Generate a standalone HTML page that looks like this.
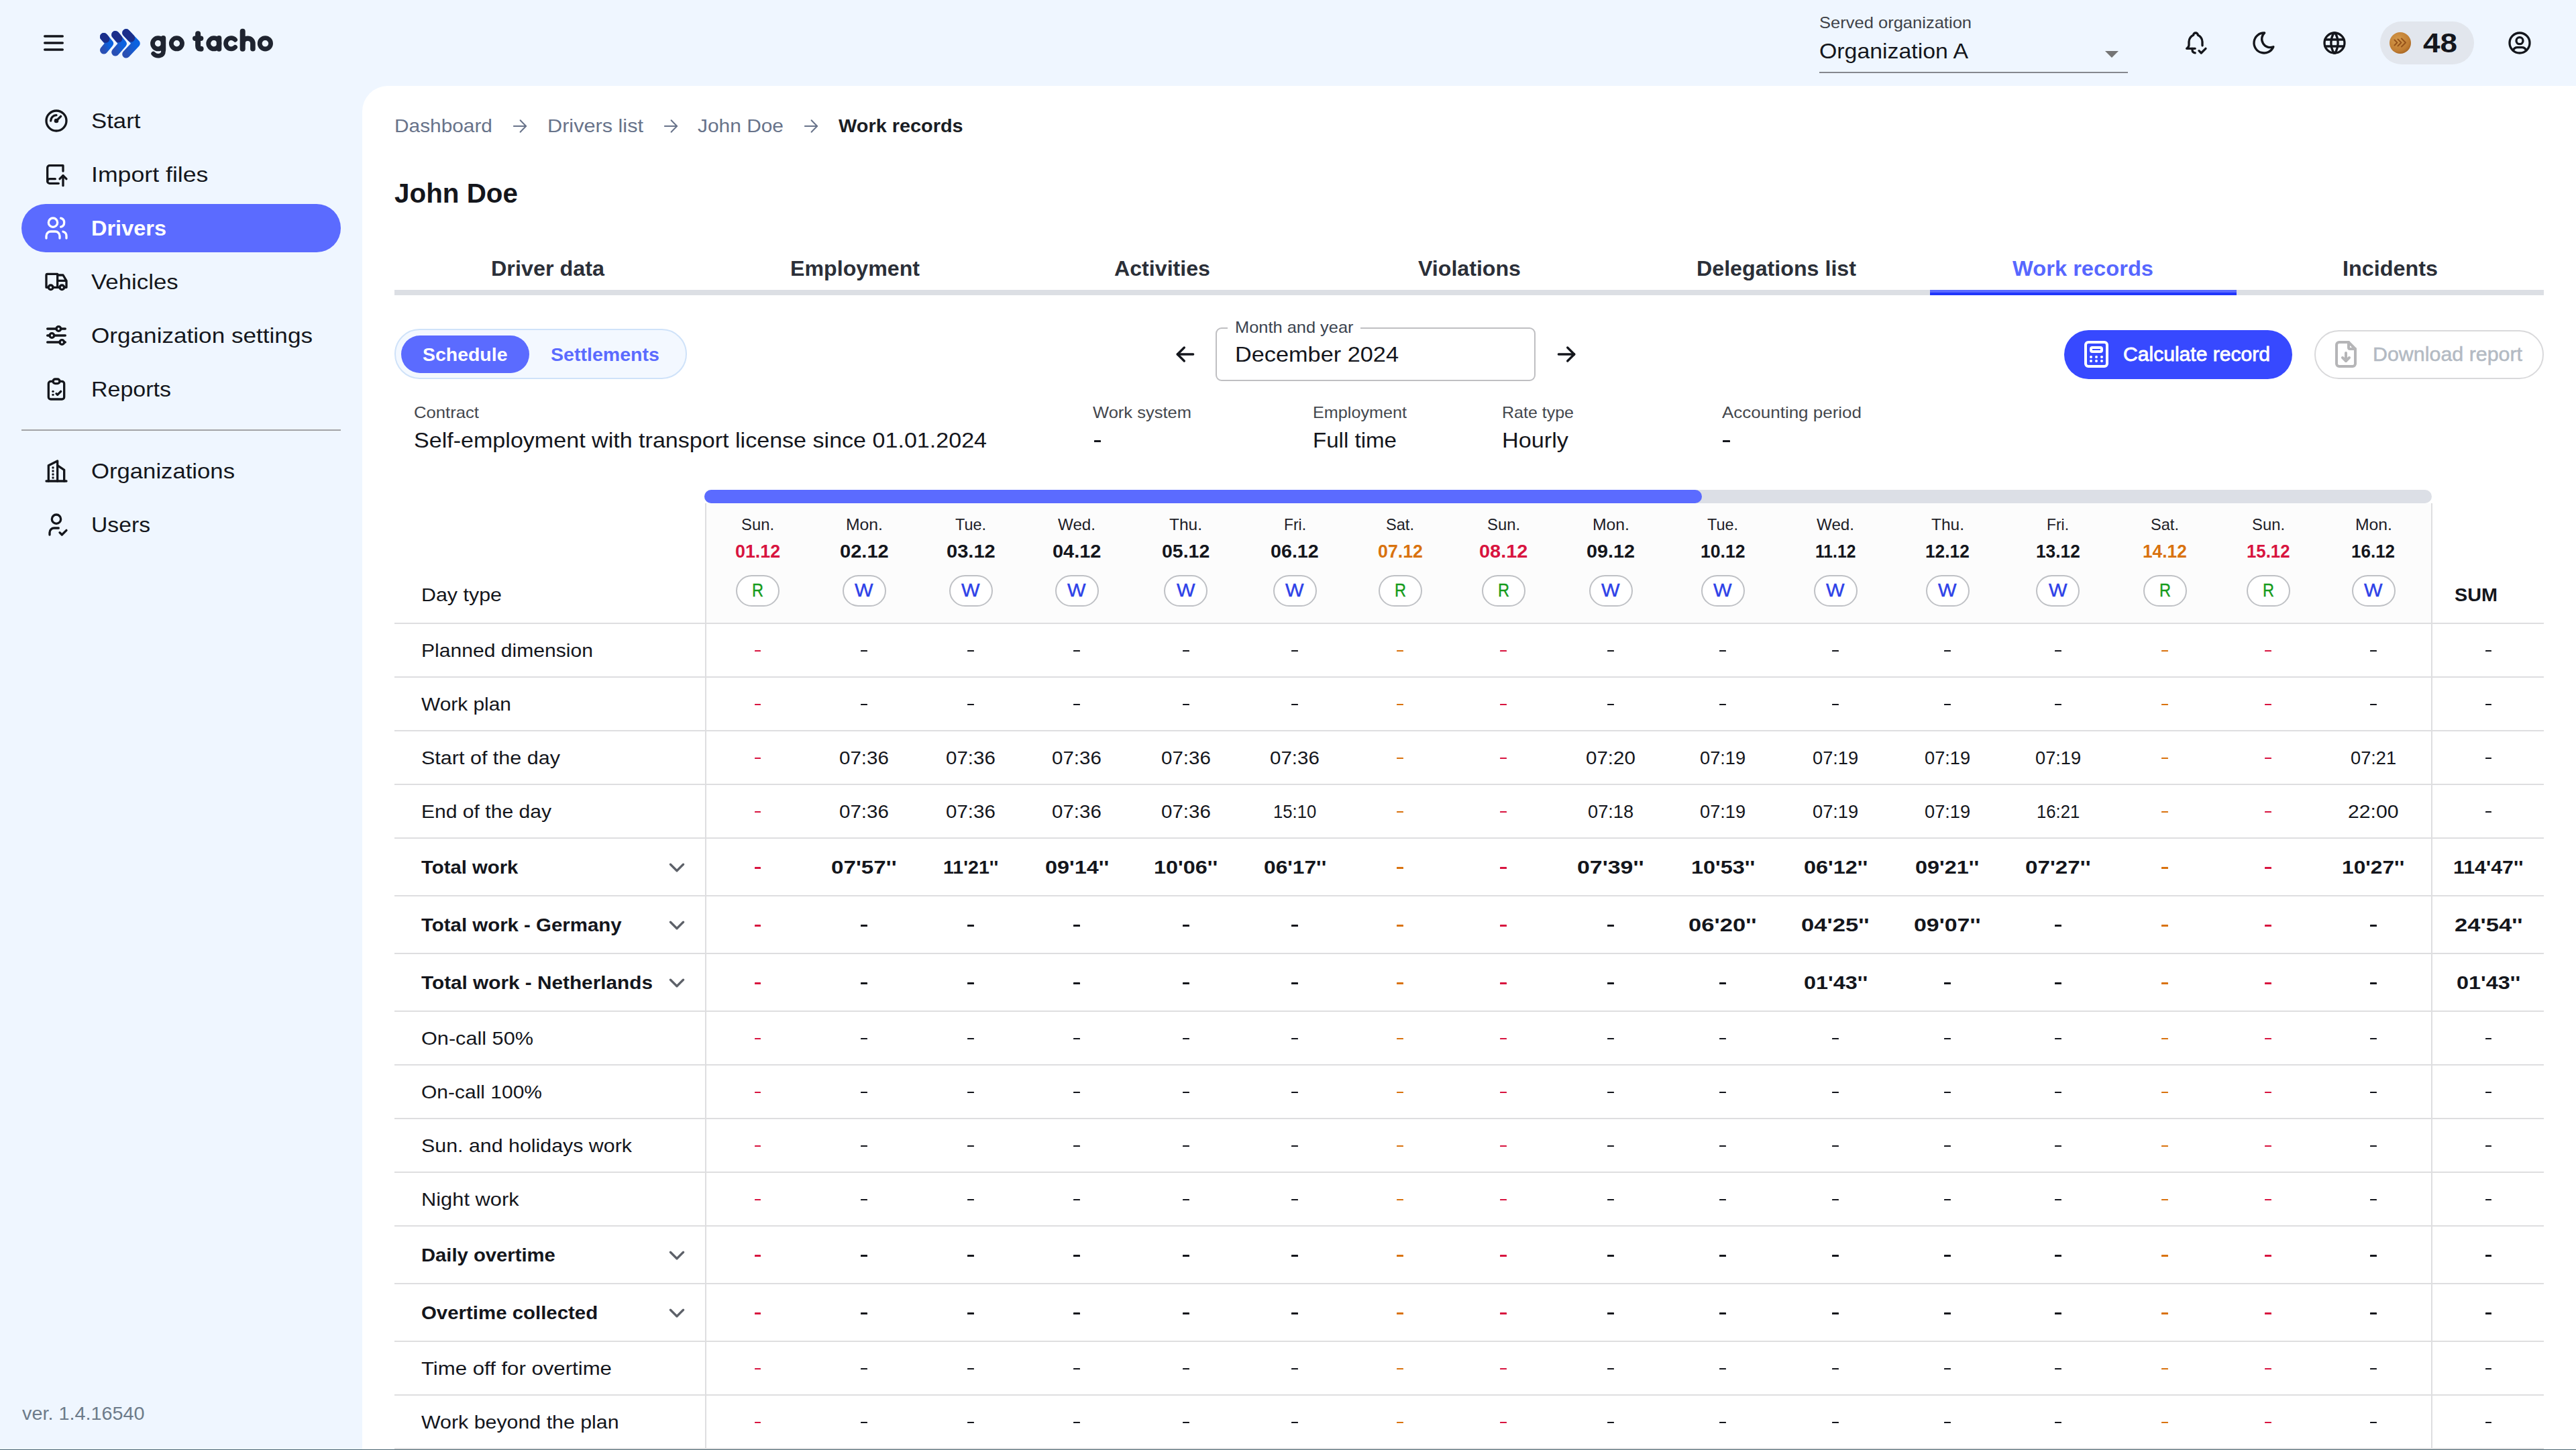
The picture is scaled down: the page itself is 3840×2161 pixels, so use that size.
<!DOCTYPE html>
<html><head><meta charset="utf-8"><title>Work records</title>
<style>
html,body{margin:0;padding:0;}
body{width:3840px;height:2161px;overflow:hidden;position:relative;background:#eff6ff;font-family:"Liberation Sans",sans-serif;}
.t{position:absolute;white-space:nowrap;line-height:1;transform-origin:0 0;}
.b{position:absolute;}
</style></head><body>
<div class="b" style="left:540px;top:128px;width:3300px;height:2040px;background:#fff;border-top-left-radius:38px;"></div>
<svg class="b" style="left:60.0px;top:44.0px" width="40" height="40" viewBox="0 0 24 24" fill="none" stroke="#14161c" stroke-width="2" stroke-linecap="round" stroke-linejoin="round"><path d="M4 6h16"/><path d="M4 12h16"/><path d="M4 18h16"/></svg>
<svg class="b" style="left:140px;top:30px" width="280" height="70" viewBox="140 30 280 70" fill="none" stroke-linecap="round" stroke-linejoin="round">
<defs><linearGradient id="lg" x1="0" y1="1" x2="1" y2="0"><stop offset="0" stop-color="#2a4fb3"/><stop offset="0.7" stop-color="#0a62e0"/></linearGradient></defs>
<g stroke="url(#lg)" stroke-width="11.6">
<path d="M154.8 74.8 L163.2 64.8 L154.8 54.7"/>
<path d="M172 77.8 L183 65.1 L172 51.7"/>
<path d="M188 80.8 L203 64.8 L188 48.9"/>
</g>
<g stroke="#1b2e8a" stroke-width="11.6">
<path d="M154.8 54.7 L157.6 58"/>
<path d="M172 51.7 L176.8 57.5"/>
<path d="M188 48.9 L195.4 56.8"/>
</g>
<g stroke="#1f2430" stroke-width="8">
<circle cx="235.6" cy="64.8" r="8.1" stroke-width="6.8"/><path d="M243.4 56.8 V74" stroke-width="7.6"/><path d="M243.6 72 V75.5 C243.6 84.6 233.4 85 228.6 79.9" stroke-width="6.6"/>
<circle cx="263.4" cy="64.8" r="8.1" stroke-width="6.8"/>
<path d="M295.1 50.3 V68.5 C295.1 72.3 296.5 72.7 299.6 72.7"/><path d="M290.7 57.2 H299.6" stroke-width="7.4"/>
<circle cx="318.8" cy="64.8" r="8.1" stroke-width="6.8"/><path d="M326.5 56.8 V72.9" stroke-width="7.6"/>
<path d="M350.6 59.3 A8.1 8.1 0 1 0 350.6 70.3" stroke-width="6.8"/>
<path d="M361.7 46.8 V72.7"/><path d="M361.7 64.8 A7.6 7.6 0 0 1 376.9 64.8 V72.7" stroke-width="7.6"/>
<circle cx="395.4" cy="64.8" r="8.2" stroke-width="6.8"/>
</g></svg>
<span class="t" style="left:2712.00px;top:21.68px;font-size:24px;color:#3f4248;transform:scaleX(1.0635);">Served organization</span>
<span class="t" style="left:2712.00px;top:59.91px;font-size:32px;color:#14161c;transform:scaleX(1.0576);">Organization A</span>
<div class="b" style="left:2712px;top:107px;width:460px;height:2px;background:#85888e;"></div>
<svg class="b" style="left:3138px;top:76px" width="20" height="10" viewBox="0 0 20 10"><path d="M0 0h20l-10 10z" fill="#757575"/></svg>
<svg class="b" style="left:3252.5px;top:44.0px" width="40" height="40" viewBox="0 0 24 24" fill="none" stroke="#14161c" stroke-width="2" stroke-linecap="round" stroke-linejoin="round"><path d="M11.5 17h-7.5a4 4 0 0 0 2 -3v-3a7 7 0 0 1 4 -6a2 2 0 1 1 4 0a7 7 0 0 1 4 6v3c.016 .129 .037 .256 .065 .382"/><path d="M9 17v1a3 3 0 0 0 2.502 2.959"/><path d="M15 19l2 2l4 -4"/></svg>
<svg class="b" style="left:3355.0px;top:44.0px" width="40" height="40" viewBox="0 0 24 24" fill="none" stroke="#14161c" stroke-width="2" stroke-linecap="round" stroke-linejoin="round"><path d="M12 3c.132 0 .263 0 .393 0a7.5 7.5 0 0 0 7.92 12.446a9 9 0 1 1 -8.313 -12.454z"/></svg>
<svg class="b" style="left:3460.0px;top:44.0px" width="40" height="40" viewBox="0 0 24 24" fill="none" stroke="#14161c" stroke-width="2" stroke-linecap="round" stroke-linejoin="round"><path d="M3 12a9 9 0 1 0 18 0a9 9 0 0 0 -18 0"/><path d="M3.6 9h16.8"/><path d="M3.6 15h16.8"/><path d="M11.5 3a17 17 0 0 0 0 18"/><path d="M12.5 3a17 17 0 0 1 0 18"/></svg>
<div class="b" style="left:3548px;top:32px;width:140px;height:64px;background:#e2e6ed;border-radius:32px;"></div>
<svg class="b" style="left:3561px;top:46.5px" width="34" height="34" viewBox="0 0 34 34"><defs><radialGradient id="cg" cx="0.4" cy="0.35" r="0.7"><stop offset="0" stop-color="#d59a4c"/><stop offset="0.75" stop-color="#c07d32"/><stop offset="1" stop-color="#a5621f"/></radialGradient></defs><circle cx="17" cy="17" r="16" fill="url(#cg)"/><g fill="none" stroke="#96531a" stroke-width="2" stroke-linecap="round" stroke-linejoin="round"><path d="M8.5 12.5l4 4l-4 4"/><path d="M13.5 11.5l5 5l-5 5"/><path d="M19 10.5l6 6l-6 6"/></g></svg>
<span class="t" style="left:3612.00px;top:44.14px;font-size:40px;color:#14161c;font-weight:700;transform:scaleX(1.1461);">48</span>
<svg class="b" style="left:3735.5px;top:44.0px" width="40" height="40" viewBox="0 0 24 24" fill="none" stroke="#14161c" stroke-width="2" stroke-linecap="round" stroke-linejoin="round"><path d="M12 12m-9 0a9 9 0 1 0 18 0a9 9 0 1 0 -18 0"/><path d="M12 10m-3 0a3 3 0 1 0 6 0a3 3 0 1 0 -6 0"/><path d="M6.168 18.849a4 4 0 0 1 3.832 -2.849h4a4 4 0 0 1 3.834 2.855"/></svg>
<div class="b" style="left:32px;top:304px;width:476px;height:72px;background:#5b6bff;border-radius:36px;"></div>
<svg class="b" style="left:64.0px;top:160.0px" width="40" height="40" viewBox="0 0 24 24" fill="none" stroke="#14161c" stroke-width="2" stroke-linecap="round" stroke-linejoin="round"><path d="M12 12m-9 0a9 9 0 1 0 18 0a9 9 0 1 0 -18 0"/><path d="M12 12m-1 0a1 1 0 1 0 2 0a1 1 0 1 0 -2 0"/><path d="M13.41 10.59l2.59 -2.59"/><path d="M7 12a5 5 0 0 1 5 -5"/></svg>
<span class="t" style="left:136.30px;top:164.41px;font-size:32px;color:#14161c;transform:scaleX(1.0862);">Start</span>
<svg class="b" style="left:64.0px;top:240.0px" width="40" height="40" viewBox="0 0 24 24" fill="none" stroke="#14161c" stroke-width="2" stroke-linecap="round" stroke-linejoin="round"><path d="M14 20h-8a2 2 0 0 1 -2 -2v-12a2 2 0 0 1 2 -2h12v5"/><path d="M11 16h-5a2 2 0 0 0 -2 2"/><path d="M15 16l3 -3l3 3"/><path d="M18 13v9"/></svg>
<span class="t" style="left:136.30px;top:244.41px;font-size:32px;color:#14161c;transform:scaleX(1.1145);">Import files</span>
<svg class="b" style="left:64.0px;top:320.0px" width="40" height="40" viewBox="0 0 24 24" fill="none" stroke="#fff" stroke-width="2" stroke-linecap="round" stroke-linejoin="round"><path d="M9 7m-4 0a4 4 0 1 0 8 0a4 4 0 1 0 -8 0"/><path d="M3 21v-2a4 4 0 0 1 4 -4h4a4 4 0 0 1 4 4v2"/><path d="M16 3.13a4 4 0 0 1 0 7.75"/><path d="M21 21v-2a4 4 0 0 0 -3 -3.85"/></svg>
<span class="t" style="left:136.30px;top:324.41px;font-size:32px;color:#fff;font-weight:700;transform:scaleX(1.0154);">Drivers</span>
<svg class="b" style="left:64.0px;top:400.0px" width="40" height="40" viewBox="0 0 24 24" fill="none" stroke="#14161c" stroke-width="2" stroke-linecap="round" stroke-linejoin="round"><path d="M7 17m-2 0a2 2 0 1 0 4 0a2 2 0 1 0 -4 0"/><path d="M17 17m-2 0a2 2 0 1 0 4 0a2 2 0 1 0 -4 0"/><path d="M5 17h-2v-11a1 1 0 0 1 1 -1h9v12m-4 0h6m4 0h2v-6h-8m0 -5h5l3 5"/></svg>
<span class="t" style="left:136.30px;top:404.41px;font-size:32px;color:#14161c;transform:scaleX(1.0882);">Vehicles</span>
<svg class="b" style="left:64.0px;top:480.0px" width="40" height="40" viewBox="0 0 24 24" fill="none" stroke="#14161c" stroke-width="2" stroke-linecap="round" stroke-linejoin="round"><path d="M14 6m-2 0a2 2 0 1 0 4 0a2 2 0 1 0 -4 0"/><path d="M4 6l8 0"/><path d="M16 6l4 0"/><path d="M8 12m-2 0a2 2 0 1 0 4 0a2 2 0 1 0 -4 0"/><path d="M4 12l2 0"/><path d="M10 12l10 0"/><path d="M17 18m-2 0a2 2 0 1 0 4 0a2 2 0 1 0 -4 0"/><path d="M4 18l11 0"/><path d="M19 18l1 0"/></svg>
<span class="t" style="left:136.30px;top:484.41px;font-size:32px;color:#14161c;transform:scaleX(1.0978);">Organization settings</span>
<svg class="b" style="left:64.0px;top:560.0px" width="40" height="40" viewBox="0 0 24 24" fill="none" stroke="#14161c" stroke-width="2" stroke-linecap="round" stroke-linejoin="round"><path d="M9 5h-2a2 2 0 0 0 -2 2v12a2 2 0 0 0 2 2h10a2 2 0 0 0 2 -2v-12a2 2 0 0 0 -2 -2h-2"/><path d="M9 3m0 2a2 2 0 0 1 2 -2h2a2 2 0 0 1 2 2v0a2 2 0 0 1 -2 2h-2a2 2 0 0 1 -2 -2z"/><path d="M9 14h.01"/><path d="M9 17h.01"/><path d="M12 16l1 1l3 -3"/></svg>
<span class="t" style="left:136.30px;top:564.41px;font-size:32px;color:#14161c;transform:scaleX(1.0621);">Reports</span>
<svg class="b" style="left:64.0px;top:682.0px" width="40" height="40" viewBox="0 0 24 24" fill="none" stroke="#14161c" stroke-width="2" stroke-linecap="round" stroke-linejoin="round"><path d="M3 21l18 0"/><path d="M5 21v-14l8 -4v18"/><path d="M19 21v-10l-6 -4"/><path d="M9 9l0 .01"/><path d="M9 12l0 .01"/><path d="M9 15l0 .01"/><path d="M9 18l0 .01"/></svg>
<span class="t" style="left:136.30px;top:686.41px;font-size:32px;color:#14161c;transform:scaleX(1.0839);">Organizations</span>
<svg class="b" style="left:64.0px;top:762.0px" width="40" height="40" viewBox="0 0 24 24" fill="none" stroke="#14161c" stroke-width="2" stroke-linecap="round" stroke-linejoin="round"><path d="M8 7a4 4 0 1 0 8 0a4 4 0 0 0 -8 0"/><path d="M6 21v-2a4 4 0 0 1 4 -4h4"/><path d="M15 19l2 2l4 -4"/></svg>
<span class="t" style="left:136.30px;top:766.41px;font-size:32px;color:#14161c;transform:scaleX(1.0531);">Users</span>
<div class="b" style="left:32px;top:640px;width:476px;height:2px;background:#a2a3a6;"></div>
<span class="t" style="left:33.00px;top:2093.10px;font-size:28px;color:#6d7b8a;transform:scaleX(1.0280);">ver. 1.4.16540</span>
<span class="t" style="left:588.00px;top:174.30px;font-size:28px;color:#68738a;transform:scaleX(1.0656);">Dashboard</span>
<svg class="b" style="left:762.8px;top:176.2px" width="24" height="24" viewBox="0 0 24 24" fill="none" stroke="#68738a" stroke-width="2" stroke-linecap="round" stroke-linejoin="round"><path d="M2.9 12h18.2"/><path d="M12.6 3.3l8.5 8.7l-8.5 8.7"/></svg>
<span class="t" style="left:815.80px;top:174.30px;font-size:28px;color:#68738a;transform:scaleX(1.0943);">Drivers list</span>
<svg class="b" style="left:987.8px;top:176.2px" width="24" height="24" viewBox="0 0 24 24" fill="none" stroke="#68738a" stroke-width="2" stroke-linecap="round" stroke-linejoin="round"><path d="M2.9 12h18.2"/><path d="M12.6 3.3l8.5 8.7l-8.5 8.7"/></svg>
<span class="t" style="left:1040.00px;top:174.30px;font-size:28px;color:#68738a;transform:scaleX(1.0676);">John Doe</span>
<svg class="b" style="left:1196.8px;top:176.2px" width="24" height="24" viewBox="0 0 24 24" fill="none" stroke="#68738a" stroke-width="2" stroke-linecap="round" stroke-linejoin="round"><path d="M2.9 12h18.2"/><path d="M12.6 3.3l8.5 8.7l-8.5 8.7"/></svg>
<span class="t" style="left:1250.00px;top:174.30px;font-size:28px;color:#1a1d24;font-weight:700;transform:scaleX(1.0316);">Work records</span>
<span class="t" style="left:588.00px;top:268.14px;font-size:40px;color:#14161c;font-weight:700;transform:scaleX(1.0096);">John Doe</span>
<div class="b" style="left:588px;top:432px;width:3204px;height:8px;background:#dcdfe4;"></div>
<span class="t" style="left:732.36px;top:383.91px;font-size:32px;color:#2b2f38;font-weight:700;transform:scaleX(1.0108);">Driver data</span>
<span class="t" style="left:1178.07px;top:383.91px;font-size:32px;color:#2b2f38;font-weight:700;transform:scaleX(1.0050);">Employment</span>
<span class="t" style="left:1660.79px;top:383.91px;font-size:32px;color:#2b2f38;font-weight:700;transform:scaleX(1.0051);">Activities</span>
<span class="t" style="left:2113.50px;top:383.91px;font-size:32px;color:#2b2f38;font-weight:700;transform:scaleX(1.0044);">Violations</span>
<span class="t" style="left:2528.71px;top:383.91px;font-size:32px;color:#2b2f38;font-weight:700;transform:scaleX(1.0063);">Delegations list</span>
<span class="t" style="left:3000.43px;top:383.91px;font-size:32px;color:#5767ff;font-weight:700;transform:scaleX(1.0209);">Work records</span>
<div class="b" style="left:2877px;top:432px;width:457px;height:4px;background:#5a6aff;"></div>
<div class="b" style="left:2877px;top:436px;width:457px;height:4px;background:#2136fb;"></div>
<span class="t" style="left:3492.14px;top:383.91px;font-size:32px;color:#2b2f38;font-weight:700;transform:scaleX(1.0109);">Incidents</span>
<div class="b" style="left:588px;top:490px;width:436px;height:75px;background:#f3f8ff;border:2px solid #cfe2f9;border-radius:38px;box-sizing:border-box;"></div>
<div class="b" style="left:598px;top:500px;width:191px;height:56px;background:#5b6bff;border-radius:28px;"></div>
<span class="t" style="left:630.00px;top:514.90px;font-size:28px;color:#fff;font-weight:700;transform:scaleX(1.0159);">Schedule</span>
<span class="t" style="left:820.70px;top:514.90px;font-size:28px;color:#5b6bff;font-weight:700;transform:scaleX(1.0205);">Settlements</span>
<svg class="b" style="left:1746.5px;top:508.0px" width="40" height="40" viewBox="0 0 24 24" fill="none" stroke="#14161c" stroke-width="2" stroke-linecap="round" stroke-linejoin="round"><path d="M5 12l14 0"/><path d="M5 12l6 6"/><path d="M5 12l6 -6"/></svg>
<div class="b" style="left:1812px;top:488px;width:477px;height:80px;border:2px solid #bfbfc2;border-radius:9px;box-sizing:border-box;"></div>
<div class="b" style="left:1830px;top:485px;width:198px;height:8px;background:#fff;"></div>
<span class="t" style="left:1840.70px;top:475.98px;font-size:24px;color:#3b4450;transform:scaleX(1.0584);">Month and year</span>
<span class="t" style="left:1840.70px;top:511.91px;font-size:32px;color:#14161c;transform:scaleX(1.0716);">December 2024</span>
<svg class="b" style="left:2314.5px;top:508.0px" width="40" height="40" viewBox="0 0 24 24" fill="none" stroke="#14161c" stroke-width="2" stroke-linecap="round" stroke-linejoin="round"><path d="M5 12l14 0"/><path d="M13 18l6 -6"/><path d="M13 6l6 6"/></svg>
<div class="b" style="left:3077px;top:492px;width:340px;height:73px;background:#3749ff;border-radius:37px;"></div>
<svg class="b" style="left:3101.2px;top:504.29999999999995px" width="48" height="48" viewBox="0 0 24 24" fill="none" stroke="#fff" stroke-width="2" stroke-linecap="round" stroke-linejoin="round"><path d="M4 3m0 2a2 2 0 0 1 2 -2h12a2 2 0 0 1 2 2v14a2 2 0 0 1 -2 2h-12a2 2 0 0 1 -2 -2z"/><path d="M8 7m0 1a1 1 0 0 1 1 -1h6a1 1 0 0 1 1 1v1a1 1 0 0 1 -1 1h-6a1 1 0 0 1 -1 -1z"/><path d="M8 14l0 .01"/><path d="M12 14l0 .01"/><path d="M16 14l0 .01"/><path d="M8 17l0 .01"/><path d="M12 17l0 .01"/><path d="M16 17l0 .01"/></svg>
<span class="t" style="left:3165.00px;top:514.45px;font-size:29px;color:#fff;transform:scaleX(1.0373);-webkit-text-stroke:0.8px #fff;">Calculate record</span>
<div class="b" style="left:3450px;top:492px;width:342px;height:73px;border:2px solid #d9d9db;border-radius:37px;box-sizing:border-box;"></div>
<svg class="b" style="left:3473.0px;top:504.29999999999995px" width="48" height="48" viewBox="0 0 24 24" fill="none" stroke="#b5b5b7" stroke-width="2" stroke-linecap="round" stroke-linejoin="round"><path d="M14 3v4a1 1 0 0 0 1 1h4"/><path d="M17 21h-10a2 2 0 0 1 -2 -2v-14a2 2 0 0 1 2 -2h7l5 5v11a2 2 0 0 1 -2 2z"/><path d="M12 17v-6"/><path d="M9.5 14.5l2.5 2.5l2.5 -2.5"/></svg>
<span class="t" style="left:3537.00px;top:514.45px;font-size:29px;color:#b3bac3;transform:scaleX(1.0482);-webkit-text-stroke:0.5px #b3bac3;">Download report</span>
<span class="t" style="left:617.00px;top:602.88px;font-size:24px;color:#44474d;transform:scaleX(1.0694);">Contract</span>
<span class="t" style="left:617.00px;top:639.91px;font-size:32px;color:#14161c;transform:scaleX(1.0646);">Self-employment with transport license since 01.01.2024</span>
<span class="t" style="left:1629.00px;top:602.88px;font-size:24px;color:#44474d;transform:scaleX(1.0633);">Work system</span>
<div class="b" style="left:1630.50px;top:655.8px;width:10.8px;height:3.1px;background:#14161c;border-radius:0.6px"></div>
<span class="t" style="left:1957.00px;top:602.88px;font-size:24px;color:#44474d;transform:scaleX(1.0495);">Employment</span>
<span class="t" style="left:1957.00px;top:639.91px;font-size:32px;color:#14161c;transform:scaleX(1.0339);">Full time</span>
<span class="t" style="left:2239.00px;top:602.88px;font-size:24px;color:#44474d;transform:scaleX(1.0417);">Rate type</span>
<span class="t" style="left:2239.00px;top:639.91px;font-size:32px;color:#14161c;transform:scaleX(1.0706);">Hourly</span>
<span class="t" style="left:2566.70px;top:602.88px;font-size:24px;color:#44474d;transform:scaleX(1.0827);">Accounting period</span>
<div class="b" style="left:2568.20px;top:655.8px;width:10.8px;height:3.1px;background:#14161c;border-radius:0.6px"></div>
<div class="b" style="left:1053px;top:750px;width:2571px;height:179px;background:#fcfcfc;"></div>
<div class="b" style="left:1050px;top:730px;width:2575px;height:20px;background:#dcdfe6;border-radius:10px;"></div>
<div class="b" style="left:1050px;top:730px;width:1487px;height:20px;background:#5b6bff;border-radius:10px;"></div>
<span class="t" style="left:1105.20px;top:770.18px;font-size:24px;color:#1d2027;transform:scaleX(0.9924);">Sun.</span>
<span class="t" style="left:1096.10px;top:808.30px;font-size:28px;color:#d8143f;font-weight:700;transform:scaleX(0.9587);">01.12</span>
<div class="b" style="left:1097.2px;top:856.5px;width:65px;height:47px;border:2px solid #bfc1c5;border-radius:24px;box-sizing:border-box;background:#fff;"></div>
<span class="t" style="left:1121.20px;top:866.30px;font-size:28px;color:#169c1c;transform:scaleX(0.8408);-webkit-text-stroke:0.45px #169c1c;">R</span>
<span class="t" style="left:1260.70px;top:770.18px;font-size:24px;color:#1d2027;transform:scaleX(1.0307);">Mon.</span>
<span class="t" style="left:1251.80px;top:808.30px;font-size:28px;color:#14161c;font-weight:700;transform:scaleX(1.0386);">02.12</span>
<div class="b" style="left:1255.7px;top:856.5px;width:65px;height:47px;border:2px solid #bfc1c5;border-radius:24px;box-sizing:border-box;background:#fff;"></div>
<span class="t" style="left:1274.45px;top:866.30px;font-size:28px;color:#2d41e8;transform:scaleX(1.0408);-webkit-text-stroke:0.45px #2d41e8;">W</span>
<span class="t" style="left:1424.10px;top:770.18px;font-size:24px;color:#1d2027;transform:scaleX(0.9761);">Tue.</span>
<span class="t" style="left:1410.70px;top:808.30px;font-size:28px;color:#14161c;font-weight:700;transform:scaleX(1.0386);">03.12</span>
<div class="b" style="left:1414.6px;top:856.5px;width:65px;height:47px;border:2px solid #bfc1c5;border-radius:24px;box-sizing:border-box;background:#fff;"></div>
<span class="t" style="left:1433.35px;top:866.30px;font-size:28px;color:#2d41e8;transform:scaleX(1.0408);-webkit-text-stroke:0.45px #2d41e8;">W</span>
<span class="t" style="left:1577.10px;top:770.18px;font-size:24px;color:#1d2027;transform:scaleX(1.0076);">Wed.</span>
<span class="t" style="left:1568.85px;top:808.30px;font-size:28px;color:#14161c;font-weight:700;transform:scaleX(1.0343);">04.12</span>
<div class="b" style="left:1572.6px;top:856.5px;width:65px;height:47px;border:2px solid #bfc1c5;border-radius:24px;box-sizing:border-box;background:#fff;"></div>
<span class="t" style="left:1591.35px;top:866.30px;font-size:28px;color:#2d41e8;transform:scaleX(1.0408);-webkit-text-stroke:0.45px #2d41e8;">W</span>
<span class="t" style="left:1743.30px;top:770.18px;font-size:24px;color:#1d2027;transform:scaleX(1.0205);">Thu.</span>
<span class="t" style="left:1732.15px;top:808.30px;font-size:28px;color:#14161c;font-weight:700;transform:scaleX(1.0172);">05.12</span>
<div class="b" style="left:1735.3px;top:856.5px;width:65px;height:47px;border:2px solid #bfc1c5;border-radius:24px;box-sizing:border-box;background:#fff;"></div>
<span class="t" style="left:1754.05px;top:866.30px;font-size:28px;color:#2d41e8;transform:scaleX(1.0408);-webkit-text-stroke:0.45px #2d41e8;">W</span>
<span class="t" style="left:1913.60px;top:770.18px;font-size:24px;color:#1d2027;transform:scaleX(0.9522);">Fri.</span>
<span class="t" style="left:1894.20px;top:808.30px;font-size:28px;color:#14161c;font-weight:700;transform:scaleX(1.0243);">06.12</span>
<div class="b" style="left:1897.6px;top:856.5px;width:65px;height:47px;border:2px solid #bfc1c5;border-radius:24px;box-sizing:border-box;background:#fff;"></div>
<span class="t" style="left:1916.35px;top:866.30px;font-size:28px;color:#2d41e8;transform:scaleX(1.0408);-webkit-text-stroke:0.45px #2d41e8;">W</span>
<span class="t" style="left:2066.20px;top:770.18px;font-size:24px;color:#1d2027;transform:scaleX(0.9835);">Sat.</span>
<span class="t" style="left:2053.70px;top:808.30px;font-size:28px;color:#d9720e;font-weight:700;transform:scaleX(0.9559);">07.12</span>
<div class="b" style="left:2054.7px;top:856.5px;width:65px;height:47px;border:2px solid #bfc1c5;border-radius:24px;box-sizing:border-box;background:#fff;"></div>
<span class="t" style="left:2078.70px;top:866.30px;font-size:28px;color:#169c1c;transform:scaleX(0.8408);-webkit-text-stroke:0.45px #169c1c;">R</span>
<span class="t" style="left:2216.50px;top:770.18px;font-size:24px;color:#1d2027;transform:scaleX(0.9924);">Sun.</span>
<span class="t" style="left:2204.85px;top:808.30px;font-size:28px;color:#d8143f;font-weight:700;transform:scaleX(1.0315);">08.12</span>
<div class="b" style="left:2208.5px;top:856.5px;width:65px;height:47px;border:2px solid #bfc1c5;border-radius:24px;box-sizing:border-box;background:#fff;"></div>
<span class="t" style="left:2232.50px;top:866.30px;font-size:28px;color:#169c1c;transform:scaleX(0.8408);-webkit-text-stroke:0.45px #169c1c;">R</span>
<span class="t" style="left:2373.50px;top:770.18px;font-size:24px;color:#1d2027;transform:scaleX(1.0307);">Mon.</span>
<span class="t" style="left:2365.00px;top:808.30px;font-size:28px;color:#14161c;font-weight:700;transform:scaleX(1.0272);">09.12</span>
<div class="b" style="left:2368.5px;top:856.5px;width:65px;height:47px;border:2px solid #bfc1c5;border-radius:24px;box-sizing:border-box;background:#fff;"></div>
<span class="t" style="left:2387.25px;top:866.30px;font-size:28px;color:#2d41e8;transform:scaleX(1.0408);-webkit-text-stroke:0.45px #2d41e8;">W</span>
<span class="t" style="left:2545.10px;top:770.18px;font-size:24px;color:#1d2027;transform:scaleX(0.9761);">Tue.</span>
<span class="t" style="left:2534.80px;top:808.30px;font-size:28px;color:#14161c;font-weight:700;transform:scaleX(0.9502);">10.12</span>
<div class="b" style="left:2535.6px;top:856.5px;width:65px;height:47px;border:2px solid #bfc1c5;border-radius:24px;box-sizing:border-box;background:#fff;"></div>
<span class="t" style="left:2554.35px;top:866.30px;font-size:28px;color:#2d41e8;transform:scaleX(1.0408);-webkit-text-stroke:0.45px #2d41e8;">W</span>
<span class="t" style="left:2708.10px;top:770.18px;font-size:24px;color:#1d2027;transform:scaleX(1.0076);">Wed.</span>
<span class="t" style="left:2705.90px;top:808.30px;font-size:28px;color:#14161c;font-weight:700;transform:scaleX(0.8811);">11.12</span>
<div class="b" style="left:2703.6px;top:856.5px;width:65px;height:47px;border:2px solid #bfc1c5;border-radius:24px;box-sizing:border-box;background:#fff;"></div>
<span class="t" style="left:2722.35px;top:866.30px;font-size:28px;color:#2d41e8;transform:scaleX(1.0408);-webkit-text-stroke:0.45px #2d41e8;">W</span>
<span class="t" style="left:2878.50px;top:770.18px;font-size:24px;color:#1d2027;transform:scaleX(1.0205);">Thu.</span>
<span class="t" style="left:2870.10px;top:808.30px;font-size:28px;color:#14161c;font-weight:700;transform:scaleX(0.9387);">12.12</span>
<div class="b" style="left:2870.5px;top:856.5px;width:65px;height:47px;border:2px solid #bfc1c5;border-radius:24px;box-sizing:border-box;background:#fff;"></div>
<span class="t" style="left:2889.25px;top:866.30px;font-size:28px;color:#2d41e8;transform:scaleX(1.0408);-webkit-text-stroke:0.45px #2d41e8;">W</span>
<span class="t" style="left:3051.30px;top:770.18px;font-size:24px;color:#1d2027;transform:scaleX(0.9522);">Fri.</span>
<span class="t" style="left:3034.90px;top:808.30px;font-size:28px;color:#14161c;font-weight:700;transform:scaleX(0.9387);">13.12</span>
<div class="b" style="left:3035.3px;top:856.5px;width:65px;height:47px;border:2px solid #bfc1c5;border-radius:24px;box-sizing:border-box;background:#fff;"></div>
<span class="t" style="left:3054.05px;top:866.30px;font-size:28px;color:#2d41e8;transform:scaleX(1.0408);-webkit-text-stroke:0.45px #2d41e8;">W</span>
<span class="t" style="left:3206.00px;top:770.18px;font-size:24px;color:#1d2027;transform:scaleX(0.9835);">Sat.</span>
<span class="t" style="left:3194.10px;top:808.30px;font-size:28px;color:#d9720e;font-weight:700;transform:scaleX(0.9387);">14.12</span>
<div class="b" style="left:3194.5px;top:856.5px;width:65px;height:47px;border:2px solid #bfc1c5;border-radius:24px;box-sizing:border-box;background:#fff;"></div>
<span class="t" style="left:3218.50px;top:866.30px;font-size:28px;color:#169c1c;transform:scaleX(0.8408);-webkit-text-stroke:0.45px #169c1c;">R</span>
<span class="t" style="left:3356.50px;top:770.18px;font-size:24px;color:#1d2027;transform:scaleX(0.9924);">Sun.</span>
<span class="t" style="left:3348.70px;top:808.30px;font-size:28px;color:#d8143f;font-weight:700;transform:scaleX(0.9216);">15.12</span>
<div class="b" style="left:3348.5px;top:856.5px;width:65px;height:47px;border:2px solid #bfc1c5;border-radius:24px;box-sizing:border-box;background:#fff;"></div>
<span class="t" style="left:3372.50px;top:866.30px;font-size:28px;color:#169c1c;transform:scaleX(0.8408);-webkit-text-stroke:0.45px #169c1c;">R</span>
<span class="t" style="left:3510.50px;top:770.18px;font-size:24px;color:#1d2027;transform:scaleX(1.0307);">Mon.</span>
<span class="t" style="left:3505.45px;top:808.30px;font-size:28px;color:#14161c;font-weight:700;transform:scaleX(0.9288);">16.12</span>
<div class="b" style="left:3505.5px;top:856.5px;width:65px;height:47px;border:2px solid #bfc1c5;border-radius:24px;box-sizing:border-box;background:#fff;"></div>
<span class="t" style="left:3524.25px;top:866.30px;font-size:28px;color:#2d41e8;transform:scaleX(1.0408);-webkit-text-stroke:0.45px #2d41e8;">W</span>
<span class="t" style="left:628.00px;top:873.30px;font-size:28px;color:#14161c;transform:scaleX(1.0858);">Day type</span>
<span class="t" style="left:3659.00px;top:873.30px;font-size:28px;color:#14161c;font-weight:700;transform:scaleX(1.0286);">SUM</span>
<div class="b" style="left:588px;top:928px;width:3204px;height:2px;background:#dedee0;"></div>
<span class="t" style="left:628.00px;top:955.60px;font-size:28px;color:#14161c;transform:scaleX(1.0746);">Planned dimension</span>
<div class="b" style="left:1124.90px;top:969.30px;width:9.6px;height:2.2px;background:#d8143f;border-radius:0.6px"></div>
<div class="b" style="left:1283.40px;top:969.30px;width:9.6px;height:2.2px;background:#14161c;border-radius:0.6px"></div>
<div class="b" style="left:1442.30px;top:969.30px;width:9.6px;height:2.2px;background:#14161c;border-radius:0.6px"></div>
<div class="b" style="left:1600.30px;top:969.30px;width:9.6px;height:2.2px;background:#14161c;border-radius:0.6px"></div>
<div class="b" style="left:1763.00px;top:969.30px;width:9.6px;height:2.2px;background:#14161c;border-radius:0.6px"></div>
<div class="b" style="left:1925.30px;top:969.30px;width:9.6px;height:2.2px;background:#14161c;border-radius:0.6px"></div>
<div class="b" style="left:2082.40px;top:969.30px;width:9.6px;height:2.2px;background:#d9720e;border-radius:0.6px"></div>
<div class="b" style="left:2236.20px;top:969.30px;width:9.6px;height:2.2px;background:#d8143f;border-radius:0.6px"></div>
<div class="b" style="left:2396.20px;top:969.30px;width:9.6px;height:2.2px;background:#14161c;border-radius:0.6px"></div>
<div class="b" style="left:2563.30px;top:969.30px;width:9.6px;height:2.2px;background:#14161c;border-radius:0.6px"></div>
<div class="b" style="left:2731.30px;top:969.30px;width:9.6px;height:2.2px;background:#14161c;border-radius:0.6px"></div>
<div class="b" style="left:2898.20px;top:969.30px;width:9.6px;height:2.2px;background:#14161c;border-radius:0.6px"></div>
<div class="b" style="left:3063.00px;top:969.30px;width:9.6px;height:2.2px;background:#14161c;border-radius:0.6px"></div>
<div class="b" style="left:3222.20px;top:969.30px;width:9.6px;height:2.2px;background:#d9720e;border-radius:0.6px"></div>
<div class="b" style="left:3376.20px;top:969.30px;width:9.6px;height:2.2px;background:#d8143f;border-radius:0.6px"></div>
<div class="b" style="left:3533.20px;top:969.30px;width:9.6px;height:2.2px;background:#14161c;border-radius:0.6px"></div>
<div class="b" style="left:3704.70px;top:969.30px;width:9.6px;height:2.2px;background:#14161c;border-radius:0.6px"></div>
<div class="b" style="left:588px;top:1008px;width:3204px;height:2px;background:#dedee0;"></div>
<span class="t" style="left:628.00px;top:1035.60px;font-size:28px;color:#14161c;transform:scaleX(1.0672);">Work plan</span>
<div class="b" style="left:1124.90px;top:1049.30px;width:9.6px;height:2.2px;background:#d8143f;border-radius:0.6px"></div>
<div class="b" style="left:1283.40px;top:1049.30px;width:9.6px;height:2.2px;background:#14161c;border-radius:0.6px"></div>
<div class="b" style="left:1442.30px;top:1049.30px;width:9.6px;height:2.2px;background:#14161c;border-radius:0.6px"></div>
<div class="b" style="left:1600.30px;top:1049.30px;width:9.6px;height:2.2px;background:#14161c;border-radius:0.6px"></div>
<div class="b" style="left:1763.00px;top:1049.30px;width:9.6px;height:2.2px;background:#14161c;border-radius:0.6px"></div>
<div class="b" style="left:1925.30px;top:1049.30px;width:9.6px;height:2.2px;background:#14161c;border-radius:0.6px"></div>
<div class="b" style="left:2082.40px;top:1049.30px;width:9.6px;height:2.2px;background:#d9720e;border-radius:0.6px"></div>
<div class="b" style="left:2236.20px;top:1049.30px;width:9.6px;height:2.2px;background:#d8143f;border-radius:0.6px"></div>
<div class="b" style="left:2396.20px;top:1049.30px;width:9.6px;height:2.2px;background:#14161c;border-radius:0.6px"></div>
<div class="b" style="left:2563.30px;top:1049.30px;width:9.6px;height:2.2px;background:#14161c;border-radius:0.6px"></div>
<div class="b" style="left:2731.30px;top:1049.30px;width:9.6px;height:2.2px;background:#14161c;border-radius:0.6px"></div>
<div class="b" style="left:2898.20px;top:1049.30px;width:9.6px;height:2.2px;background:#14161c;border-radius:0.6px"></div>
<div class="b" style="left:3063.00px;top:1049.30px;width:9.6px;height:2.2px;background:#14161c;border-radius:0.6px"></div>
<div class="b" style="left:3222.20px;top:1049.30px;width:9.6px;height:2.2px;background:#d9720e;border-radius:0.6px"></div>
<div class="b" style="left:3376.20px;top:1049.30px;width:9.6px;height:2.2px;background:#d8143f;border-radius:0.6px"></div>
<div class="b" style="left:3533.20px;top:1049.30px;width:9.6px;height:2.2px;background:#14161c;border-radius:0.6px"></div>
<div class="b" style="left:3704.70px;top:1049.30px;width:9.6px;height:2.2px;background:#14161c;border-radius:0.6px"></div>
<div class="b" style="left:588px;top:1088px;width:3204px;height:2px;background:#dedee0;"></div>
<span class="t" style="left:628.00px;top:1115.60px;font-size:28px;color:#14161c;transform:scaleX(1.0898);">Start of the day</span>
<div class="b" style="left:1124.90px;top:1129.30px;width:9.6px;height:2.2px;background:#d8143f;border-radius:0.6px"></div>
<span class="t" style="left:1251.30px;top:1115.60px;font-size:28px;color:#14161c;transform:scaleX(1.0529);">07:36</span>
<span class="t" style="left:1410.20px;top:1115.60px;font-size:28px;color:#14161c;transform:scaleX(1.0529);">07:36</span>
<span class="t" style="left:1568.20px;top:1115.60px;font-size:28px;color:#14161c;transform:scaleX(1.0529);">07:36</span>
<span class="t" style="left:1730.90px;top:1115.60px;font-size:28px;color:#14161c;transform:scaleX(1.0529);">07:36</span>
<span class="t" style="left:1893.20px;top:1115.60px;font-size:28px;color:#14161c;transform:scaleX(1.0529);">07:36</span>
<div class="b" style="left:2082.40px;top:1129.30px;width:9.6px;height:2.2px;background:#d9720e;border-radius:0.6px"></div>
<div class="b" style="left:2236.20px;top:1129.30px;width:9.6px;height:2.2px;background:#d8143f;border-radius:0.6px"></div>
<span class="t" style="left:2364.10px;top:1115.60px;font-size:28px;color:#14161c;transform:scaleX(1.0529);">07:20</span>
<span class="t" style="left:2534.05px;top:1115.60px;font-size:28px;color:#14161c;transform:scaleX(0.9716);">07:19</span>
<span class="t" style="left:2702.05px;top:1115.60px;font-size:28px;color:#14161c;transform:scaleX(0.9716);">07:19</span>
<span class="t" style="left:2868.95px;top:1115.60px;font-size:28px;color:#14161c;transform:scaleX(0.9716);">07:19</span>
<span class="t" style="left:3033.75px;top:1115.60px;font-size:28px;color:#14161c;transform:scaleX(0.9716);">07:19</span>
<div class="b" style="left:3222.20px;top:1129.30px;width:9.6px;height:2.2px;background:#d9720e;border-radius:0.6px"></div>
<div class="b" style="left:3376.20px;top:1129.30px;width:9.6px;height:2.2px;background:#d8143f;border-radius:0.6px"></div>
<span class="t" style="left:3503.95px;top:1115.60px;font-size:28px;color:#14161c;transform:scaleX(0.9716);">07:21</span>
<div class="b" style="left:3704.70px;top:1129.30px;width:9.6px;height:2.2px;background:#14161c;border-radius:0.6px"></div>
<div class="b" style="left:588px;top:1168px;width:3204px;height:2px;background:#dedee0;"></div>
<span class="t" style="left:628.00px;top:1195.60px;font-size:28px;color:#14161c;transform:scaleX(1.0740);">End of the day</span>
<div class="b" style="left:1124.90px;top:1209.30px;width:9.6px;height:2.2px;background:#d8143f;border-radius:0.6px"></div>
<span class="t" style="left:1251.30px;top:1195.60px;font-size:28px;color:#14161c;transform:scaleX(1.0529);">07:36</span>
<span class="t" style="left:1410.20px;top:1195.60px;font-size:28px;color:#14161c;transform:scaleX(1.0529);">07:36</span>
<span class="t" style="left:1568.20px;top:1195.60px;font-size:28px;color:#14161c;transform:scaleX(1.0529);">07:36</span>
<span class="t" style="left:1730.90px;top:1195.60px;font-size:28px;color:#14161c;transform:scaleX(1.0529);">07:36</span>
<span class="t" style="left:1898.00px;top:1195.60px;font-size:28px;color:#14161c;transform:scaleX(0.9159);">15:10</span>
<div class="b" style="left:2082.40px;top:1209.30px;width:9.6px;height:2.2px;background:#d9720e;border-radius:0.6px"></div>
<div class="b" style="left:2236.20px;top:1209.30px;width:9.6px;height:2.2px;background:#d8143f;border-radius:0.6px"></div>
<span class="t" style="left:2366.95px;top:1195.60px;font-size:28px;color:#14161c;transform:scaleX(0.9716);">07:18</span>
<span class="t" style="left:2534.05px;top:1195.60px;font-size:28px;color:#14161c;transform:scaleX(0.9716);">07:19</span>
<span class="t" style="left:2702.05px;top:1195.60px;font-size:28px;color:#14161c;transform:scaleX(0.9716);">07:19</span>
<span class="t" style="left:2868.95px;top:1195.60px;font-size:28px;color:#14161c;transform:scaleX(0.9716);">07:19</span>
<span class="t" style="left:3035.70px;top:1195.60px;font-size:28px;color:#14161c;transform:scaleX(0.9159);">16:21</span>
<div class="b" style="left:3222.20px;top:1209.30px;width:9.6px;height:2.2px;background:#d9720e;border-radius:0.6px"></div>
<div class="b" style="left:3376.20px;top:1209.30px;width:9.6px;height:2.2px;background:#d8143f;border-radius:0.6px"></div>
<span class="t" style="left:3500.20px;top:1195.60px;font-size:28px;color:#14161c;transform:scaleX(1.0786);">22:00</span>
<div class="b" style="left:3704.70px;top:1209.30px;width:9.6px;height:2.2px;background:#14161c;border-radius:0.6px"></div>
<div class="b" style="left:588px;top:1248px;width:3204px;height:2px;background:#dedee0;"></div>
<span class="t" style="left:628.00px;top:1278.60px;font-size:28px;color:#14161c;font-weight:700;transform:scaleX(1.0466);">Total work</span>
<svg class="b" style="left:990.0px;top:1273.7px" width="38" height="38" viewBox="0 0 24 24" fill="none" stroke="#5d6169" stroke-width="2.1" stroke-linecap="round" stroke-linejoin="round"><path d="M6 9l6 6l6 -6"/></svg>
<div class="b" style="left:1124.90px;top:1291.85px;width:9.6px;height:3.1px;background:#d8143f;border-radius:0.6px"></div>
<span class="t" style="left:1239.40px;top:1278.60px;font-size:28px;color:#14161c;font-weight:700;transform:scaleX(1.1862);">07'57''</span>
<span class="t" style="left:1405.90px;top:1278.60px;font-size:28px;color:#14161c;font-weight:700;transform:scaleX(1.0206);">11'21''</span>
<span class="t" style="left:1557.50px;top:1278.60px;font-size:28px;color:#14161c;font-weight:700;transform:scaleX(1.1570);">09'14''</span>
<span class="t" style="left:1720.20px;top:1278.60px;font-size:28px;color:#14161c;font-weight:700;transform:scaleX(1.1570);">10'06''</span>
<span class="t" style="left:1883.50px;top:1278.60px;font-size:28px;color:#14161c;font-weight:700;transform:scaleX(1.1327);">06'17''</span>
<div class="b" style="left:2082.40px;top:1291.85px;width:9.6px;height:3.1px;background:#d9720e;border-radius:0.6px"></div>
<div class="b" style="left:2236.20px;top:1291.85px;width:9.6px;height:3.1px;background:#d8143f;border-radius:0.6px"></div>
<span class="t" style="left:2351.20px;top:1278.60px;font-size:28px;color:#14161c;font-weight:700;transform:scaleX(1.2105);">07'39''</span>
<span class="t" style="left:2520.50px;top:1278.60px;font-size:28px;color:#14161c;font-weight:700;transform:scaleX(1.1570);">10'53''</span>
<span class="t" style="left:2688.50px;top:1278.60px;font-size:28px;color:#14161c;font-weight:700;transform:scaleX(1.1570);">06'12''</span>
<span class="t" style="left:2855.40px;top:1278.60px;font-size:28px;color:#14161c;font-weight:700;transform:scaleX(1.1570);">09'21''</span>
<span class="t" style="left:3019.00px;top:1278.60px;font-size:28px;color:#14161c;font-weight:700;transform:scaleX(1.1862);">07'27''</span>
<div class="b" style="left:3222.20px;top:1291.85px;width:9.6px;height:3.1px;background:#d9720e;border-radius:0.6px"></div>
<div class="b" style="left:3376.20px;top:1291.85px;width:9.6px;height:3.1px;background:#d8143f;border-radius:0.6px"></div>
<span class="t" style="left:3491.40px;top:1278.60px;font-size:28px;color:#14161c;font-weight:700;transform:scaleX(1.1327);">10'27''</span>
<span class="t" style="left:3657.30px;top:1278.60px;font-size:28px;color:#14161c;font-weight:700;transform:scaleX(1.0840);">114'47''</span>
<div class="b" style="left:588px;top:1334px;width:3204px;height:2px;background:#dedee0;"></div>
<span class="t" style="left:628.00px;top:1364.60px;font-size:28px;color:#14161c;font-weight:700;transform:scaleX(1.0508);">Total work - Germany</span>
<svg class="b" style="left:990.0px;top:1359.7px" width="38" height="38" viewBox="0 0 24 24" fill="none" stroke="#5d6169" stroke-width="2.1" stroke-linecap="round" stroke-linejoin="round"><path d="M6 9l6 6l6 -6"/></svg>
<div class="b" style="left:1124.90px;top:1377.85px;width:9.6px;height:3.1px;background:#d8143f;border-radius:0.6px"></div>
<div class="b" style="left:1283.40px;top:1377.85px;width:9.6px;height:3.1px;background:#14161c;border-radius:0.6px"></div>
<div class="b" style="left:1442.30px;top:1377.85px;width:9.6px;height:3.1px;background:#14161c;border-radius:0.6px"></div>
<div class="b" style="left:1600.30px;top:1377.85px;width:9.6px;height:3.1px;background:#14161c;border-radius:0.6px"></div>
<div class="b" style="left:1763.00px;top:1377.85px;width:9.6px;height:3.1px;background:#14161c;border-radius:0.6px"></div>
<div class="b" style="left:1925.30px;top:1377.85px;width:9.6px;height:3.1px;background:#14161c;border-radius:0.6px"></div>
<div class="b" style="left:2082.40px;top:1377.85px;width:9.6px;height:3.1px;background:#d9720e;border-radius:0.6px"></div>
<div class="b" style="left:2236.20px;top:1377.85px;width:9.6px;height:3.1px;background:#d8143f;border-radius:0.6px"></div>
<div class="b" style="left:2396.20px;top:1377.85px;width:9.6px;height:3.1px;background:#14161c;border-radius:0.6px"></div>
<span class="t" style="left:2517.30px;top:1364.60px;font-size:28px;color:#14161c;font-weight:700;transform:scaleX(1.2348);">06'20''</span>
<span class="t" style="left:2685.30px;top:1364.60px;font-size:28px;color:#14161c;font-weight:700;transform:scaleX(1.2348);">04'25''</span>
<span class="t" style="left:2853.20px;top:1364.60px;font-size:28px;color:#14161c;font-weight:700;transform:scaleX(1.2105);">09'07''</span>
<div class="b" style="left:3063.00px;top:1377.85px;width:9.6px;height:3.1px;background:#14161c;border-radius:0.6px"></div>
<div class="b" style="left:3222.20px;top:1377.85px;width:9.6px;height:3.1px;background:#d9720e;border-radius:0.6px"></div>
<div class="b" style="left:3376.20px;top:1377.85px;width:9.6px;height:3.1px;background:#d8143f;border-radius:0.6px"></div>
<div class="b" style="left:3533.20px;top:1377.85px;width:9.6px;height:3.1px;background:#14161c;border-radius:0.6px"></div>
<span class="t" style="left:3658.70px;top:1364.60px;font-size:28px;color:#14161c;font-weight:700;transform:scaleX(1.2348);">24'54''</span>
<div class="b" style="left:588px;top:1420px;width:3204px;height:2px;background:#dedee0;"></div>
<span class="t" style="left:628.00px;top:1450.60px;font-size:28px;color:#14161c;font-weight:700;transform:scaleX(1.0625);">Total work - Netherlands</span>
<svg class="b" style="left:990.0px;top:1445.7px" width="38" height="38" viewBox="0 0 24 24" fill="none" stroke="#5d6169" stroke-width="2.1" stroke-linecap="round" stroke-linejoin="round"><path d="M6 9l6 6l6 -6"/></svg>
<div class="b" style="left:1124.90px;top:1463.85px;width:9.6px;height:3.1px;background:#d8143f;border-radius:0.6px"></div>
<div class="b" style="left:1283.40px;top:1463.85px;width:9.6px;height:3.1px;background:#14161c;border-radius:0.6px"></div>
<div class="b" style="left:1442.30px;top:1463.85px;width:9.6px;height:3.1px;background:#14161c;border-radius:0.6px"></div>
<div class="b" style="left:1600.30px;top:1463.85px;width:9.6px;height:3.1px;background:#14161c;border-radius:0.6px"></div>
<div class="b" style="left:1763.00px;top:1463.85px;width:9.6px;height:3.1px;background:#14161c;border-radius:0.6px"></div>
<div class="b" style="left:1925.30px;top:1463.85px;width:9.6px;height:3.1px;background:#14161c;border-radius:0.6px"></div>
<div class="b" style="left:2082.40px;top:1463.85px;width:9.6px;height:3.1px;background:#d9720e;border-radius:0.6px"></div>
<div class="b" style="left:2236.20px;top:1463.85px;width:9.6px;height:3.1px;background:#d8143f;border-radius:0.6px"></div>
<div class="b" style="left:2396.20px;top:1463.85px;width:9.6px;height:3.1px;background:#14161c;border-radius:0.6px"></div>
<div class="b" style="left:2563.30px;top:1463.85px;width:9.6px;height:3.1px;background:#14161c;border-radius:0.6px"></div>
<span class="t" style="left:2688.50px;top:1450.60px;font-size:28px;color:#14161c;font-weight:700;transform:scaleX(1.1570);">01'43''</span>
<div class="b" style="left:2898.20px;top:1463.85px;width:9.6px;height:3.1px;background:#14161c;border-radius:0.6px"></div>
<div class="b" style="left:3063.00px;top:1463.85px;width:9.6px;height:3.1px;background:#14161c;border-radius:0.6px"></div>
<div class="b" style="left:3222.20px;top:1463.85px;width:9.6px;height:3.1px;background:#d9720e;border-radius:0.6px"></div>
<div class="b" style="left:3376.20px;top:1463.85px;width:9.6px;height:3.1px;background:#d8143f;border-radius:0.6px"></div>
<div class="b" style="left:3533.20px;top:1463.85px;width:9.6px;height:3.1px;background:#14161c;border-radius:0.6px"></div>
<span class="t" style="left:3661.90px;top:1450.60px;font-size:28px;color:#14161c;font-weight:700;transform:scaleX(1.1570);">01'43''</span>
<div class="b" style="left:588px;top:1506px;width:3204px;height:2px;background:#dedee0;"></div>
<span class="t" style="left:628.00px;top:1533.60px;font-size:28px;color:#14161c;transform:scaleX(1.0949);">On-call 50%</span>
<div class="b" style="left:1124.90px;top:1547.30px;width:9.6px;height:2.2px;background:#d8143f;border-radius:0.6px"></div>
<div class="b" style="left:1283.40px;top:1547.30px;width:9.6px;height:2.2px;background:#14161c;border-radius:0.6px"></div>
<div class="b" style="left:1442.30px;top:1547.30px;width:9.6px;height:2.2px;background:#14161c;border-radius:0.6px"></div>
<div class="b" style="left:1600.30px;top:1547.30px;width:9.6px;height:2.2px;background:#14161c;border-radius:0.6px"></div>
<div class="b" style="left:1763.00px;top:1547.30px;width:9.6px;height:2.2px;background:#14161c;border-radius:0.6px"></div>
<div class="b" style="left:1925.30px;top:1547.30px;width:9.6px;height:2.2px;background:#14161c;border-radius:0.6px"></div>
<div class="b" style="left:2082.40px;top:1547.30px;width:9.6px;height:2.2px;background:#d9720e;border-radius:0.6px"></div>
<div class="b" style="left:2236.20px;top:1547.30px;width:9.6px;height:2.2px;background:#d8143f;border-radius:0.6px"></div>
<div class="b" style="left:2396.20px;top:1547.30px;width:9.6px;height:2.2px;background:#14161c;border-radius:0.6px"></div>
<div class="b" style="left:2563.30px;top:1547.30px;width:9.6px;height:2.2px;background:#14161c;border-radius:0.6px"></div>
<div class="b" style="left:2731.30px;top:1547.30px;width:9.6px;height:2.2px;background:#14161c;border-radius:0.6px"></div>
<div class="b" style="left:2898.20px;top:1547.30px;width:9.6px;height:2.2px;background:#14161c;border-radius:0.6px"></div>
<div class="b" style="left:3063.00px;top:1547.30px;width:9.6px;height:2.2px;background:#14161c;border-radius:0.6px"></div>
<div class="b" style="left:3222.20px;top:1547.30px;width:9.6px;height:2.2px;background:#d9720e;border-radius:0.6px"></div>
<div class="b" style="left:3376.20px;top:1547.30px;width:9.6px;height:2.2px;background:#d8143f;border-radius:0.6px"></div>
<div class="b" style="left:3533.20px;top:1547.30px;width:9.6px;height:2.2px;background:#14161c;border-radius:0.6px"></div>
<div class="b" style="left:3704.70px;top:1547.30px;width:9.6px;height:2.2px;background:#14161c;border-radius:0.6px"></div>
<div class="b" style="left:588px;top:1586px;width:3204px;height:2px;background:#dedee0;"></div>
<span class="t" style="left:628.00px;top:1613.60px;font-size:28px;color:#14161c;transform:scaleX(1.0707);">On-call 100%</span>
<div class="b" style="left:1124.90px;top:1627.30px;width:9.6px;height:2.2px;background:#d8143f;border-radius:0.6px"></div>
<div class="b" style="left:1283.40px;top:1627.30px;width:9.6px;height:2.2px;background:#14161c;border-radius:0.6px"></div>
<div class="b" style="left:1442.30px;top:1627.30px;width:9.6px;height:2.2px;background:#14161c;border-radius:0.6px"></div>
<div class="b" style="left:1600.30px;top:1627.30px;width:9.6px;height:2.2px;background:#14161c;border-radius:0.6px"></div>
<div class="b" style="left:1763.00px;top:1627.30px;width:9.6px;height:2.2px;background:#14161c;border-radius:0.6px"></div>
<div class="b" style="left:1925.30px;top:1627.30px;width:9.6px;height:2.2px;background:#14161c;border-radius:0.6px"></div>
<div class="b" style="left:2082.40px;top:1627.30px;width:9.6px;height:2.2px;background:#d9720e;border-radius:0.6px"></div>
<div class="b" style="left:2236.20px;top:1627.30px;width:9.6px;height:2.2px;background:#d8143f;border-radius:0.6px"></div>
<div class="b" style="left:2396.20px;top:1627.30px;width:9.6px;height:2.2px;background:#14161c;border-radius:0.6px"></div>
<div class="b" style="left:2563.30px;top:1627.30px;width:9.6px;height:2.2px;background:#14161c;border-radius:0.6px"></div>
<div class="b" style="left:2731.30px;top:1627.30px;width:9.6px;height:2.2px;background:#14161c;border-radius:0.6px"></div>
<div class="b" style="left:2898.20px;top:1627.30px;width:9.6px;height:2.2px;background:#14161c;border-radius:0.6px"></div>
<div class="b" style="left:3063.00px;top:1627.30px;width:9.6px;height:2.2px;background:#14161c;border-radius:0.6px"></div>
<div class="b" style="left:3222.20px;top:1627.30px;width:9.6px;height:2.2px;background:#d9720e;border-radius:0.6px"></div>
<div class="b" style="left:3376.20px;top:1627.30px;width:9.6px;height:2.2px;background:#d8143f;border-radius:0.6px"></div>
<div class="b" style="left:3533.20px;top:1627.30px;width:9.6px;height:2.2px;background:#14161c;border-radius:0.6px"></div>
<div class="b" style="left:3704.70px;top:1627.30px;width:9.6px;height:2.2px;background:#14161c;border-radius:0.6px"></div>
<div class="b" style="left:588px;top:1666px;width:3204px;height:2px;background:#dedee0;"></div>
<span class="t" style="left:628.00px;top:1693.60px;font-size:28px;color:#14161c;transform:scaleX(1.0844);">Sun. and holidays work</span>
<div class="b" style="left:1124.90px;top:1707.30px;width:9.6px;height:2.2px;background:#d8143f;border-radius:0.6px"></div>
<div class="b" style="left:1283.40px;top:1707.30px;width:9.6px;height:2.2px;background:#14161c;border-radius:0.6px"></div>
<div class="b" style="left:1442.30px;top:1707.30px;width:9.6px;height:2.2px;background:#14161c;border-radius:0.6px"></div>
<div class="b" style="left:1600.30px;top:1707.30px;width:9.6px;height:2.2px;background:#14161c;border-radius:0.6px"></div>
<div class="b" style="left:1763.00px;top:1707.30px;width:9.6px;height:2.2px;background:#14161c;border-radius:0.6px"></div>
<div class="b" style="left:1925.30px;top:1707.30px;width:9.6px;height:2.2px;background:#14161c;border-radius:0.6px"></div>
<div class="b" style="left:2082.40px;top:1707.30px;width:9.6px;height:2.2px;background:#d9720e;border-radius:0.6px"></div>
<div class="b" style="left:2236.20px;top:1707.30px;width:9.6px;height:2.2px;background:#d8143f;border-radius:0.6px"></div>
<div class="b" style="left:2396.20px;top:1707.30px;width:9.6px;height:2.2px;background:#14161c;border-radius:0.6px"></div>
<div class="b" style="left:2563.30px;top:1707.30px;width:9.6px;height:2.2px;background:#14161c;border-radius:0.6px"></div>
<div class="b" style="left:2731.30px;top:1707.30px;width:9.6px;height:2.2px;background:#14161c;border-radius:0.6px"></div>
<div class="b" style="left:2898.20px;top:1707.30px;width:9.6px;height:2.2px;background:#14161c;border-radius:0.6px"></div>
<div class="b" style="left:3063.00px;top:1707.30px;width:9.6px;height:2.2px;background:#14161c;border-radius:0.6px"></div>
<div class="b" style="left:3222.20px;top:1707.30px;width:9.6px;height:2.2px;background:#d9720e;border-radius:0.6px"></div>
<div class="b" style="left:3376.20px;top:1707.30px;width:9.6px;height:2.2px;background:#d8143f;border-radius:0.6px"></div>
<div class="b" style="left:3533.20px;top:1707.30px;width:9.6px;height:2.2px;background:#14161c;border-radius:0.6px"></div>
<div class="b" style="left:3704.70px;top:1707.30px;width:9.6px;height:2.2px;background:#14161c;border-radius:0.6px"></div>
<div class="b" style="left:588px;top:1746px;width:3204px;height:2px;background:#dedee0;"></div>
<span class="t" style="left:628.00px;top:1773.60px;font-size:28px;color:#14161c;transform:scaleX(1.1007);">Night work</span>
<div class="b" style="left:1124.90px;top:1787.30px;width:9.6px;height:2.2px;background:#d8143f;border-radius:0.6px"></div>
<div class="b" style="left:1283.40px;top:1787.30px;width:9.6px;height:2.2px;background:#14161c;border-radius:0.6px"></div>
<div class="b" style="left:1442.30px;top:1787.30px;width:9.6px;height:2.2px;background:#14161c;border-radius:0.6px"></div>
<div class="b" style="left:1600.30px;top:1787.30px;width:9.6px;height:2.2px;background:#14161c;border-radius:0.6px"></div>
<div class="b" style="left:1763.00px;top:1787.30px;width:9.6px;height:2.2px;background:#14161c;border-radius:0.6px"></div>
<div class="b" style="left:1925.30px;top:1787.30px;width:9.6px;height:2.2px;background:#14161c;border-radius:0.6px"></div>
<div class="b" style="left:2082.40px;top:1787.30px;width:9.6px;height:2.2px;background:#d9720e;border-radius:0.6px"></div>
<div class="b" style="left:2236.20px;top:1787.30px;width:9.6px;height:2.2px;background:#d8143f;border-radius:0.6px"></div>
<div class="b" style="left:2396.20px;top:1787.30px;width:9.6px;height:2.2px;background:#14161c;border-radius:0.6px"></div>
<div class="b" style="left:2563.30px;top:1787.30px;width:9.6px;height:2.2px;background:#14161c;border-radius:0.6px"></div>
<div class="b" style="left:2731.30px;top:1787.30px;width:9.6px;height:2.2px;background:#14161c;border-radius:0.6px"></div>
<div class="b" style="left:2898.20px;top:1787.30px;width:9.6px;height:2.2px;background:#14161c;border-radius:0.6px"></div>
<div class="b" style="left:3063.00px;top:1787.30px;width:9.6px;height:2.2px;background:#14161c;border-radius:0.6px"></div>
<div class="b" style="left:3222.20px;top:1787.30px;width:9.6px;height:2.2px;background:#d9720e;border-radius:0.6px"></div>
<div class="b" style="left:3376.20px;top:1787.30px;width:9.6px;height:2.2px;background:#d8143f;border-radius:0.6px"></div>
<div class="b" style="left:3533.20px;top:1787.30px;width:9.6px;height:2.2px;background:#14161c;border-radius:0.6px"></div>
<div class="b" style="left:3704.70px;top:1787.30px;width:9.6px;height:2.2px;background:#14161c;border-radius:0.6px"></div>
<div class="b" style="left:588px;top:1826px;width:3204px;height:2px;background:#dedee0;"></div>
<span class="t" style="left:628.00px;top:1856.60px;font-size:28px;color:#14161c;font-weight:700;transform:scaleX(1.0436);">Daily overtime</span>
<svg class="b" style="left:990.0px;top:1851.7px" width="38" height="38" viewBox="0 0 24 24" fill="none" stroke="#5d6169" stroke-width="2.1" stroke-linecap="round" stroke-linejoin="round"><path d="M6 9l6 6l6 -6"/></svg>
<div class="b" style="left:1124.90px;top:1869.85px;width:9.6px;height:3.1px;background:#d8143f;border-radius:0.6px"></div>
<div class="b" style="left:1283.40px;top:1869.85px;width:9.6px;height:3.1px;background:#14161c;border-radius:0.6px"></div>
<div class="b" style="left:1442.30px;top:1869.85px;width:9.6px;height:3.1px;background:#14161c;border-radius:0.6px"></div>
<div class="b" style="left:1600.30px;top:1869.85px;width:9.6px;height:3.1px;background:#14161c;border-radius:0.6px"></div>
<div class="b" style="left:1763.00px;top:1869.85px;width:9.6px;height:3.1px;background:#14161c;border-radius:0.6px"></div>
<div class="b" style="left:1925.30px;top:1869.85px;width:9.6px;height:3.1px;background:#14161c;border-radius:0.6px"></div>
<div class="b" style="left:2082.40px;top:1869.85px;width:9.6px;height:3.1px;background:#d9720e;border-radius:0.6px"></div>
<div class="b" style="left:2236.20px;top:1869.85px;width:9.6px;height:3.1px;background:#d8143f;border-radius:0.6px"></div>
<div class="b" style="left:2396.20px;top:1869.85px;width:9.6px;height:3.1px;background:#14161c;border-radius:0.6px"></div>
<div class="b" style="left:2563.30px;top:1869.85px;width:9.6px;height:3.1px;background:#14161c;border-radius:0.6px"></div>
<div class="b" style="left:2731.30px;top:1869.85px;width:9.6px;height:3.1px;background:#14161c;border-radius:0.6px"></div>
<div class="b" style="left:2898.20px;top:1869.85px;width:9.6px;height:3.1px;background:#14161c;border-radius:0.6px"></div>
<div class="b" style="left:3063.00px;top:1869.85px;width:9.6px;height:3.1px;background:#14161c;border-radius:0.6px"></div>
<div class="b" style="left:3222.20px;top:1869.85px;width:9.6px;height:3.1px;background:#d9720e;border-radius:0.6px"></div>
<div class="b" style="left:3376.20px;top:1869.85px;width:9.6px;height:3.1px;background:#d8143f;border-radius:0.6px"></div>
<div class="b" style="left:3533.20px;top:1869.85px;width:9.6px;height:3.1px;background:#14161c;border-radius:0.6px"></div>
<div class="b" style="left:3704.70px;top:1869.85px;width:9.6px;height:3.1px;background:#14161c;border-radius:0.6px"></div>
<div class="b" style="left:588px;top:1912px;width:3204px;height:2px;background:#dedee0;"></div>
<span class="t" style="left:628.00px;top:1942.60px;font-size:28px;color:#14161c;font-weight:700;transform:scaleX(1.0502);">Overtime collected</span>
<svg class="b" style="left:990.0px;top:1937.7px" width="38" height="38" viewBox="0 0 24 24" fill="none" stroke="#5d6169" stroke-width="2.1" stroke-linecap="round" stroke-linejoin="round"><path d="M6 9l6 6l6 -6"/></svg>
<div class="b" style="left:1124.90px;top:1955.85px;width:9.6px;height:3.1px;background:#d8143f;border-radius:0.6px"></div>
<div class="b" style="left:1283.40px;top:1955.85px;width:9.6px;height:3.1px;background:#14161c;border-radius:0.6px"></div>
<div class="b" style="left:1442.30px;top:1955.85px;width:9.6px;height:3.1px;background:#14161c;border-radius:0.6px"></div>
<div class="b" style="left:1600.30px;top:1955.85px;width:9.6px;height:3.1px;background:#14161c;border-radius:0.6px"></div>
<div class="b" style="left:1763.00px;top:1955.85px;width:9.6px;height:3.1px;background:#14161c;border-radius:0.6px"></div>
<div class="b" style="left:1925.30px;top:1955.85px;width:9.6px;height:3.1px;background:#14161c;border-radius:0.6px"></div>
<div class="b" style="left:2082.40px;top:1955.85px;width:9.6px;height:3.1px;background:#d9720e;border-radius:0.6px"></div>
<div class="b" style="left:2236.20px;top:1955.85px;width:9.6px;height:3.1px;background:#d8143f;border-radius:0.6px"></div>
<div class="b" style="left:2396.20px;top:1955.85px;width:9.6px;height:3.1px;background:#14161c;border-radius:0.6px"></div>
<div class="b" style="left:2563.30px;top:1955.85px;width:9.6px;height:3.1px;background:#14161c;border-radius:0.6px"></div>
<div class="b" style="left:2731.30px;top:1955.85px;width:9.6px;height:3.1px;background:#14161c;border-radius:0.6px"></div>
<div class="b" style="left:2898.20px;top:1955.85px;width:9.6px;height:3.1px;background:#14161c;border-radius:0.6px"></div>
<div class="b" style="left:3063.00px;top:1955.85px;width:9.6px;height:3.1px;background:#14161c;border-radius:0.6px"></div>
<div class="b" style="left:3222.20px;top:1955.85px;width:9.6px;height:3.1px;background:#d9720e;border-radius:0.6px"></div>
<div class="b" style="left:3376.20px;top:1955.85px;width:9.6px;height:3.1px;background:#d8143f;border-radius:0.6px"></div>
<div class="b" style="left:3533.20px;top:1955.85px;width:9.6px;height:3.1px;background:#14161c;border-radius:0.6px"></div>
<div class="b" style="left:3704.70px;top:1955.85px;width:9.6px;height:3.1px;background:#14161c;border-radius:0.6px"></div>
<div class="b" style="left:588px;top:1998px;width:3204px;height:2px;background:#dedee0;"></div>
<span class="t" style="left:628.00px;top:2025.60px;font-size:28px;color:#14161c;transform:scaleX(1.1126);">Time off for overtime</span>
<div class="b" style="left:1124.90px;top:2039.30px;width:9.6px;height:2.2px;background:#d8143f;border-radius:0.6px"></div>
<div class="b" style="left:1283.40px;top:2039.30px;width:9.6px;height:2.2px;background:#14161c;border-radius:0.6px"></div>
<div class="b" style="left:1442.30px;top:2039.30px;width:9.6px;height:2.2px;background:#14161c;border-radius:0.6px"></div>
<div class="b" style="left:1600.30px;top:2039.30px;width:9.6px;height:2.2px;background:#14161c;border-radius:0.6px"></div>
<div class="b" style="left:1763.00px;top:2039.30px;width:9.6px;height:2.2px;background:#14161c;border-radius:0.6px"></div>
<div class="b" style="left:1925.30px;top:2039.30px;width:9.6px;height:2.2px;background:#14161c;border-radius:0.6px"></div>
<div class="b" style="left:2082.40px;top:2039.30px;width:9.6px;height:2.2px;background:#d9720e;border-radius:0.6px"></div>
<div class="b" style="left:2236.20px;top:2039.30px;width:9.6px;height:2.2px;background:#d8143f;border-radius:0.6px"></div>
<div class="b" style="left:2396.20px;top:2039.30px;width:9.6px;height:2.2px;background:#14161c;border-radius:0.6px"></div>
<div class="b" style="left:2563.30px;top:2039.30px;width:9.6px;height:2.2px;background:#14161c;border-radius:0.6px"></div>
<div class="b" style="left:2731.30px;top:2039.30px;width:9.6px;height:2.2px;background:#14161c;border-radius:0.6px"></div>
<div class="b" style="left:2898.20px;top:2039.30px;width:9.6px;height:2.2px;background:#14161c;border-radius:0.6px"></div>
<div class="b" style="left:3063.00px;top:2039.30px;width:9.6px;height:2.2px;background:#14161c;border-radius:0.6px"></div>
<div class="b" style="left:3222.20px;top:2039.30px;width:9.6px;height:2.2px;background:#d9720e;border-radius:0.6px"></div>
<div class="b" style="left:3376.20px;top:2039.30px;width:9.6px;height:2.2px;background:#d8143f;border-radius:0.6px"></div>
<div class="b" style="left:3533.20px;top:2039.30px;width:9.6px;height:2.2px;background:#14161c;border-radius:0.6px"></div>
<div class="b" style="left:3704.70px;top:2039.30px;width:9.6px;height:2.2px;background:#14161c;border-radius:0.6px"></div>
<div class="b" style="left:588px;top:2078px;width:3204px;height:2px;background:#dedee0;"></div>
<span class="t" style="left:628.00px;top:2105.60px;font-size:28px;color:#14161c;transform:scaleX(1.0836);">Work beyond the plan</span>
<div class="b" style="left:1124.90px;top:2119.30px;width:9.6px;height:2.2px;background:#d8143f;border-radius:0.6px"></div>
<div class="b" style="left:1283.40px;top:2119.30px;width:9.6px;height:2.2px;background:#14161c;border-radius:0.6px"></div>
<div class="b" style="left:1442.30px;top:2119.30px;width:9.6px;height:2.2px;background:#14161c;border-radius:0.6px"></div>
<div class="b" style="left:1600.30px;top:2119.30px;width:9.6px;height:2.2px;background:#14161c;border-radius:0.6px"></div>
<div class="b" style="left:1763.00px;top:2119.30px;width:9.6px;height:2.2px;background:#14161c;border-radius:0.6px"></div>
<div class="b" style="left:1925.30px;top:2119.30px;width:9.6px;height:2.2px;background:#14161c;border-radius:0.6px"></div>
<div class="b" style="left:2082.40px;top:2119.30px;width:9.6px;height:2.2px;background:#d9720e;border-radius:0.6px"></div>
<div class="b" style="left:2236.20px;top:2119.30px;width:9.6px;height:2.2px;background:#d8143f;border-radius:0.6px"></div>
<div class="b" style="left:2396.20px;top:2119.30px;width:9.6px;height:2.2px;background:#14161c;border-radius:0.6px"></div>
<div class="b" style="left:2563.30px;top:2119.30px;width:9.6px;height:2.2px;background:#14161c;border-radius:0.6px"></div>
<div class="b" style="left:2731.30px;top:2119.30px;width:9.6px;height:2.2px;background:#14161c;border-radius:0.6px"></div>
<div class="b" style="left:2898.20px;top:2119.30px;width:9.6px;height:2.2px;background:#14161c;border-radius:0.6px"></div>
<div class="b" style="left:3063.00px;top:2119.30px;width:9.6px;height:2.2px;background:#14161c;border-radius:0.6px"></div>
<div class="b" style="left:3222.20px;top:2119.30px;width:9.6px;height:2.2px;background:#d9720e;border-radius:0.6px"></div>
<div class="b" style="left:3376.20px;top:2119.30px;width:9.6px;height:2.2px;background:#d8143f;border-radius:0.6px"></div>
<div class="b" style="left:3533.20px;top:2119.30px;width:9.6px;height:2.2px;background:#14161c;border-radius:0.6px"></div>
<div class="b" style="left:3704.70px;top:2119.30px;width:9.6px;height:2.2px;background:#14161c;border-radius:0.6px"></div>
<div class="b" style="left:588px;top:2158px;width:3204px;height:2px;background:#dedee0;"></div>
<div class="b" style="left:1051px;top:750px;width:2px;height:1420px;background:#dedee0;"></div>
<div class="b" style="left:3624px;top:750px;width:2px;height:1420px;background:#dedee0;"></div>
<div class="b" style="left:0px;top:2160px;width:3840px;height:1px;background:#4b6672;"></div>
</body></html>
